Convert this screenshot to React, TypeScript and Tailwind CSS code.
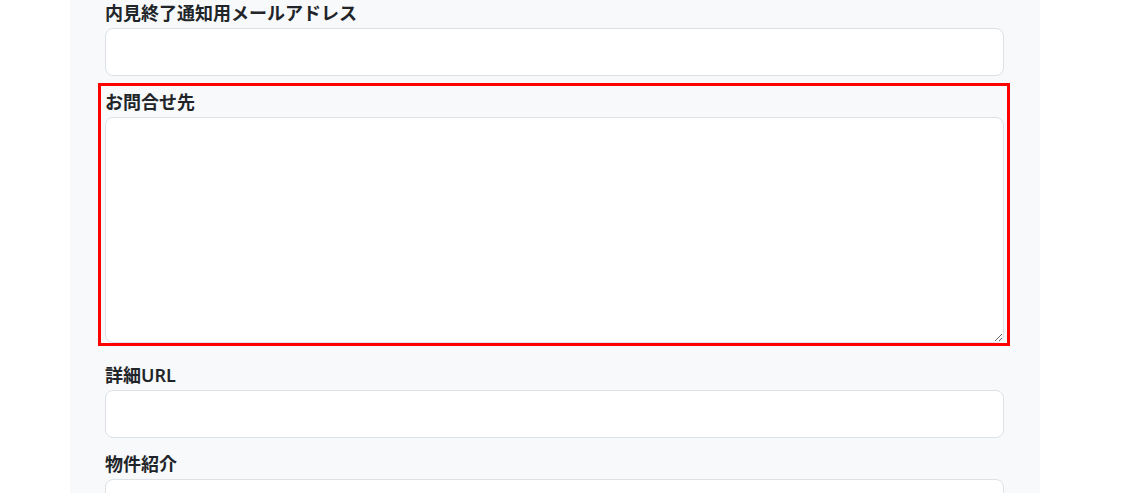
const fields = [
  { label: '内見終了通知用メールアドレス', type: 'input' },
  { label: 'お問合せ先', type: 'textarea', highlight: true },
  { label: '詳細URL', type: 'input' },
  { label: '物件紹介', type: 'input' },
]

function Field({ label, type, highlight }: { label: string; type: string; highlight?: boolean }) {
  return (
    <div className={`relative mb-[13px] ${type === 'textarea' ? 'pb-[6px]' : ''}`}>
      {/* 注釈用の赤枠 */}
      {highlight && (
        <div className="pointer-events-none absolute -top-[6px] -right-[6px] bottom-[3px] -left-[7px] border-[3px] border-[#ff0000]" />
      )}
      <label className="mb-[2px] block text-[18px] leading-[26px] font-semibold text-[#212529]">{label}</label>
      {type === 'textarea' ? (
        <textarea className="block h-[226px] w-full resize-y rounded-lg border border-[#dee2e6] bg-white" />
      ) : (
        <input type="text" className="block h-12 w-full rounded-lg border border-[#dee2e6] bg-white" />
      )}
    </div>
  )
}

export default function App() {
  return (
    <div className="h-[493px] w-[1124px] overflow-hidden bg-white font-['Noto_Sans','Noto_Sans_CJK_JP',sans-serif]">
      <div className="ml-[70px] h-full w-[970px] bg-[#f8f9fa] pl-[35px] pr-[36px]">
        {fields.map((f) => (
          <Field key={f.label} {...f} />
        ))}
      </div>
    </div>
  )
}
